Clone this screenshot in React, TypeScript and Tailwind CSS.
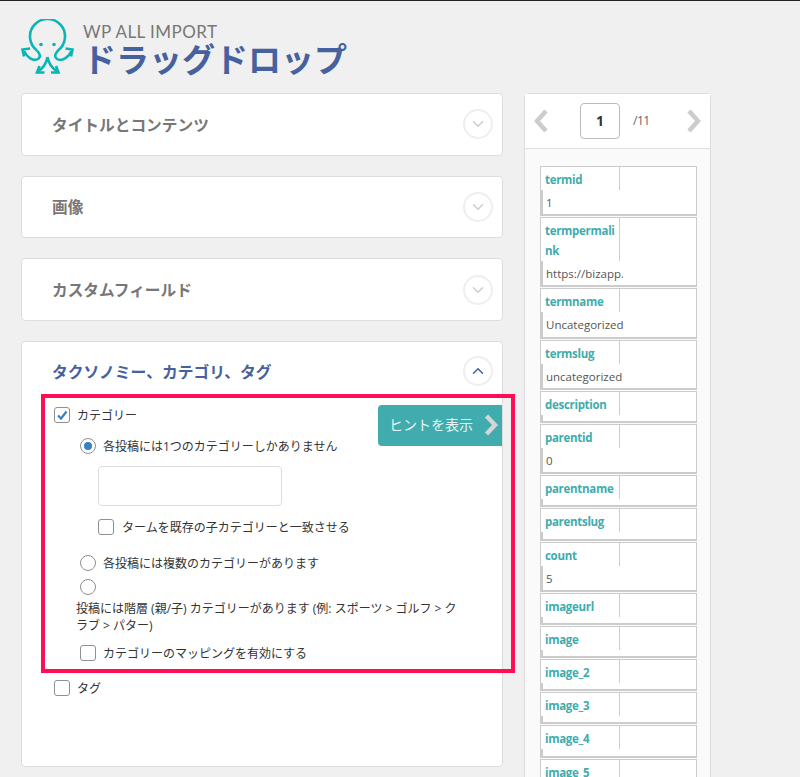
import { ChevronDown, ChevronUp } from 'lucide-react'
import type { ReactNode } from 'react'

const rows: { label: string; value?: string }[] = [
  { label: 'termid', value: '1' },
  { label: 'termpermalink', value: 'https://bizapp.' },
  { label: 'termname', value: 'Uncategorized' },
  { label: 'termslug', value: 'uncategorized' },
  { label: 'description' },
  { label: 'parentid', value: '0' },
  { label: 'parentname' },
  { label: 'parentslug' },
  { label: 'count', value: '5' },
  { label: 'imageurl' },
  { label: 'image' },
  { label: 'image_2' },
  { label: 'image_3' },
  { label: 'image_4' },
  { label: 'image_5' },
]

function Logo() {
  return (
    <div className="flex h-[76px] items-start pl-[21px] pt-[18px]">
      <svg
        viewBox="21 19 54 56"
        className="h-[56px] w-[54px] shrink-0 text-[#0ab5b5]"
        fill="none"
        stroke="currentColor"
        strokeWidth="2.6"
      >
        <path d="M37 50.5A17.5 17.5 0 1 1 58 50.5C55 54 54 57 57 59C62 62 69 57 71.5 51" />
        <path d="M37 50.5C40 54 41 57 38 59C33 62 27 57 24 51" />
        <path d="M30 48.5L22.5 49.5L24 56.5M65.5 48.5L72.5 49.5L71 56.5" />
        <path d="M47.5 57C46.5 63 42 69 37.5 72M47.5 57C48.5 63 53 69 58 72" />
        <path d="M44.5 72.5L37 72.5L39.5 66M51 72.5L58.5 72.5L56 66" />
        <circle cx="41" cy="44.5" r="1.8" fill="currentColor" stroke="none" />
        <circle cx="54" cy="44.5" r="1.8" fill="currentColor" stroke="none" />
      </svg>
      <div className="ml-[8px]">
        <div className="mt-[4px] font-['Lato',sans-serif] text-[17px] leading-[17px] tracking-[0.45px] text-[#777]">
          WP ALL IMPORT
        </div>
        <div className="font-['Noto_Sans_CJK_JP',sans-serif] text-[33px] font-bold leading-[36px] text-[#46629e]">
          ドラッグドロップ
        </div>
      </div>
    </div>
  )
}

function Toggle({ open }: { open?: boolean }) {
  const Icon = open ? ChevronUp : ChevronDown
  return (
    <div className="flex h-[30px] w-[30px] items-center justify-center rounded-full border-2 border-[#eee]">
      <Icon className={open ? 'h-[18px] w-[18px] text-[#46629e]' : 'h-[18px] w-[18px] text-[#ccc]'} strokeWidth={2} />
    </div>
  )
}

function Section({ title }: { title: string }) {
  return (
    <div className="flex h-[62.67px] items-center justify-between rounded-[4px] border border-[#ddd] bg-white pl-[30px] pr-[9px]">
      <h3 className="pt-[2px] text-[15.7px] font-bold text-[#777]">{title}</h3>
      <Toggle />
    </div>
  )
}

function Check({ checked }: { checked?: boolean }) {
  return (
    <span className="flex h-4 w-4 shrink-0 items-center justify-center rounded-[3px] border border-[#8c8f94] bg-white">
      {checked && (
        <svg viewBox="0 0 12 12" className="h-3 w-3 text-[#3582c4]" fill="none" stroke="currentColor" strokeWidth="2.2">
          <path d="M2 6.5L5 9.5L10.5 2.5" />
        </svg>
      )}
    </span>
  )
}

function Radio({ checked }: { checked?: boolean }) {
  return (
    <span className="flex h-4 w-4 shrink-0 items-center justify-center rounded-full border border-[#8c8f94] bg-white">
      {checked && <span className="h-2 w-2 rounded-full bg-[#3582c4]" />}
    </span>
  )
}

function Text({ children }: { children: ReactNode }) {
  return <span className="pt-[2px]">{children}</span>
}

function TaxonomyPanel() {
  return (
    <div className="relative h-[426px] rounded-[4px] border border-[#ddd] bg-white">
      <div className="flex h-[58px] items-center justify-between pl-[30px] pr-[9px]">
        <h3 className="pt-[4px] text-[15.8px] font-bold text-[#46629e]">タクソノミー、カテゴリ、タグ</h3>
        <Toggle open />
      </div>
      <div className="pl-[32px] text-xs leading-[20px] text-[#333]">
        <label className="mt-[5px] flex h-[20px] items-center gap-[7px]">
          <Check checked />
          <Text>カテゴリー</Text>
        </label>
        <div className="pl-[26px]">
          <label className="mt-[11px] flex h-[20px] items-center gap-[7px]">
            <Radio checked />
            <Text>各投稿には1つのカテゴリーしかありません</Text>
          </label>
          <div className="ml-[18px] mt-[10px] h-[40px] w-[184px] rounded-[4px] border border-[#ddd] bg-white" />
          <label className="ml-[18px] mt-[11px] flex h-[20px] items-center gap-[8px]">
            <Check />
            <Text>タームを既存の子カテゴリーと一致させる</Text>
          </label>
          <label className="mt-[16px] flex h-[20px] items-center gap-[7px]">
            <Radio />
            <Text>各投稿には複数のカテゴリーがあります</Text>
          </label>
          <div className="mt-[6px] flex h-[16px] items-center">
            <Radio />
          </div>
          <p className="-ml-[4px] mt-[5px] w-[392px] leading-[17px]">
            投稿には階層 (親/子) カテゴリーがあります (例: スポーツ &gt; ゴルフ &gt; クラブ &gt; パター)
          </p>
          <label className="mt-[9px] flex h-[20px] items-center gap-[7px]">
            <Check />
            <Text>カテゴリーのマッピングを有効にする</Text>
          </label>
        </div>
        <label className="mt-[15px] flex h-[20px] items-center gap-[7px]">
          <Check />
          <Text>タグ</Text>
        </label>
      </div>
      <div className="absolute right-0 top-[63px] flex h-[41px] w-[124px] items-center rounded-l-[4px] bg-[#40acad] pl-[11px] text-sm text-[#e8f5f5]">
        ヒントを表示
        <svg viewBox="0 0 14 22" className="ml-[11px] h-[22px] w-[14px] text-[#d5d5d5]" fill="none" stroke="currentColor" strokeWidth="4.5">
          <path d="M2.5 2L11 11L2.5 20" />
        </svg>
      </div>
    </div>
  )
}

function DataRow({ label, value }: { label: string; value?: string }) {
  return (
    <div className="border border-b-2 border-[#ccc] bg-white">
      <div className="w-[79px] border-r border-[#ccc] pt-[3px] text-[11.5px] font-bold leading-[20px] tracking-[-0.3px] text-[#40acad] pl-[4px] [overflow-wrap:anywhere]">
        {label}
      </div>
      <div className="w-[82px] overflow-hidden whitespace-nowrap border-l-2 border-[#ccc] pl-[3px]">
        {value ? (
          <div className="h-[24.2px] text-[11.5px] leading-[25px] text-[#555]">{value}</div>
        ) : (
          <div className="h-[6.2px]" />
        )}
      </div>
    </div>
  )
}

export default function App() {
  return (
    <div className="relative h-[777px] w-[800px] overflow-hidden border-t border-[#1d2327] bg-[#f0f0f0] font-['Open_Sans','Noto_Sans_CJK_JP',sans-serif]">
      <Logo />
      <div className="flex items-start gap-[21px] pl-[21px] pt-[16px]">
        <div className="flex w-[482px] flex-col gap-[20px]">
          <Section title="タイトルとコンテンツ" />
          <Section title="画像" />
          <Section title="カスタムフィールド" />
          <TaxonomyPanel />
        </div>
        <div className="w-[187px] rounded-[4px] border border-[#ddd] bg-[#fafafa]">
          <div className="flex h-[55px] items-center border-b border-[#ddd] bg-white pl-[9px] text-[#ccc]">
            <svg viewBox="0 0 14 24" className="h-[24px] w-[14px]" fill="none" stroke="currentColor" strokeWidth="4.5">
              <path d="M12 2L3 12L12 22" />
            </svg>
            <div className="ml-[32px] flex h-[36px] w-[40px] items-center justify-center rounded-[4px] border border-[#bbb] text-sm font-bold text-[#333]">
              1
            </div>
            <span className="ml-[13px] text-xs tracking-[-0.5px] text-[#666]">/11</span>
            <svg viewBox="0 0 14 24" className="ml-[37px] h-[24px] w-[14px]" fill="none" stroke="currentColor" strokeWidth="4.5">
              <path d="M2 2L11 12L2 22" />
            </svg>
          </div>
          <div className="flex flex-col gap-[1px] pl-[15px] pr-[13px] pt-[17px]">
            {rows.map((row) => (
              <DataRow key={row.label} label={row.label} value={row.value} />
            ))}
          </div>
        </div>
      </div>
      {/* red annotation drawn over the page */}
      <div className="absolute left-[41px] top-[393px] h-[279px] w-[474px] border-4 border-[#ff0d55]" />
    </div>
  )
}
